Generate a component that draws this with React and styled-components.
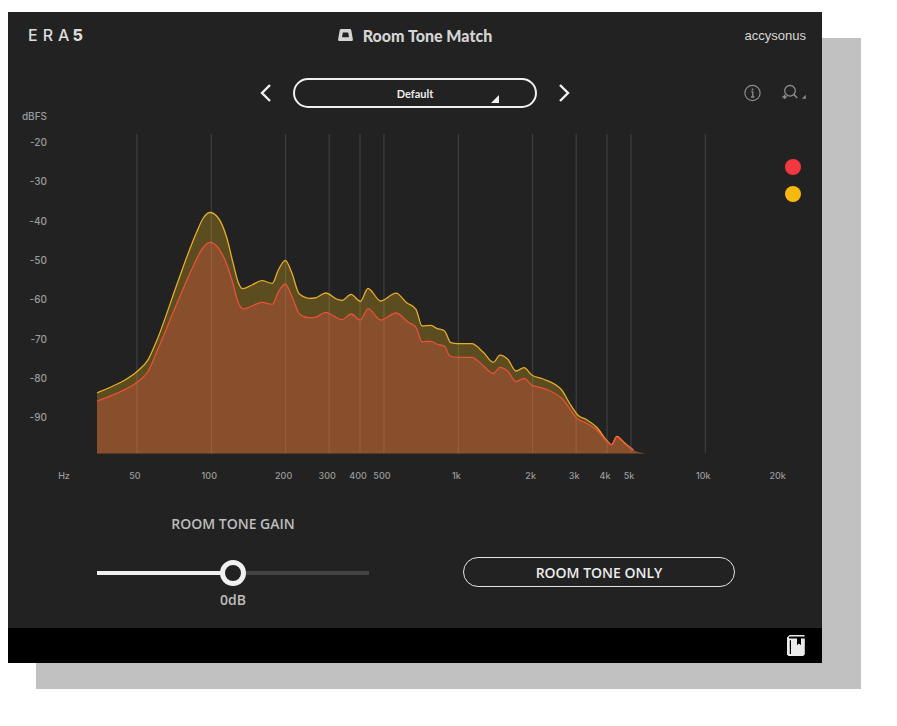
import React, { useState } from "react";
import styled, { createGlobalStyle } from "styled-components";

const yellowPoints = [
  [97, 393], [113, 386], [125, 380], [137, 371.5], [148.3, 359.3], [156.7, 340.7],
  [176.7, 285], [188.3, 253], [196.7, 232], [203.3, 218], [210, 212.5],
  [218.3, 218], [226.7, 237.5], [233.3, 264], [238.3, 282.5], [242.5, 288.7],
  [252, 285], [261.7, 280.7], [272.3, 283.3], [278.3, 270], [285.3, 260.3],
  [291.7, 272.5], [299.3, 294], [310, 298.3], [315, 298], [325.7, 293],
  [336.7, 299], [342, 300.5], [351, 294.3], [360.3, 301.3], [368, 288.5],
  [380.7, 301], [396, 293.2], [406.7, 302.7], [416, 309.3], [422, 326],
  [431, 325.3], [436.7, 328.3], [444.3, 330.7], [451, 342.7], [458, 343.7],
  [471.7, 343.7], [483.3, 352.3], [493.3, 362.3], [500, 355.2], [507.7, 359.3],
  [516, 371], [524, 367.7], [531.7, 375], [543.3, 379], [561.7, 390],
  [570, 404], [578.3, 415.5], [586.7, 419.7], [596.7, 427.3], [606.7, 440.3],
  [611.7, 444.7], [616.7, 436.3], [625, 443.3], [633.3, 450], [645, 453.5],
];

const redPoints = [
  [97, 401], [116.7, 393.3], [137, 382.3], [148.3, 371], [156.7, 352],
  [180, 296], [193.3, 266], [201.7, 249.5], [210, 242.3], [218.3, 248],
  [226.7, 264], [233.3, 285], [238.3, 302.7], [243.5, 308.8], [252, 306],
  [261.7, 302.3], [272.3, 304.3], [278.3, 292], [285.3, 284], [291.7, 296],
  [300, 314.5], [308.3, 317.7], [315, 317.4], [325.7, 312.3], [342, 319.7],
  [351, 314], [360.3, 320], [368, 308.7], [380.7, 320], [396, 313],
  [408.3, 322.3], [416, 327.3], [422, 341.7], [431, 341.3], [436.7, 344],
  [444.3, 346], [450, 356], [458, 357.3], [471.7, 357.3], [483.3, 365.7],
  [493.3, 373.5], [500, 367.3], [507.7, 371], [516, 381.5], [524, 378.3],
  [531.7, 385], [543.3, 388.3], [561.7, 398.3], [578.3, 419.5], [586.7, 423.3],
  [596.7, 430], [606.7, 441.3], [611.7, 444.9], [616.7, 437], [625, 444],
  [633.3, 450.5], [645, 453.5],
];

const frequencies = [
  [50, "50"], [100, "100"], [200, "200"], [300, "300"], [400, "400"],
  [500, "500"], [1000, "1k"], [2000, "2k"], [3000, "3k"], [4000, "4k"],
  [5000, "5k"], [10000, "10k"], [20000, "20k"],
];

const levels = [-20, -30, -40, -50, -60, -70, -80, -90];

const presets = ["Default", "Dialogue", "Interview", "Outdoor"];

const xOf = (hz) => 211.3 + 247 * Math.log10(hz / 100);
const yOf = (db) => 142 + (-20 - db) * 3.93;

// monotone cubic so the curve never overshoots its points
const curve = (pts) => {
  const n = pts.length;
  const slope = [];
  for (let i = 0; i < n - 1; i++) {
    slope.push((pts[i + 1][1] - pts[i][1]) / (pts[i + 1][0] - pts[i][0]));
  }
  const m = pts.map((p, i) => {
    if (i === 0) return slope[0];
    if (i === n - 1) return slope[n - 2];
    const a = slope[i - 1];
    const b = slope[i];
    const h0 = p[0] - pts[i - 1][0];
    const h1 = pts[i + 1][0] - p[0];
    const mid = (a * h1 + b * h0) / (h0 + h1);
    return (
      (Math.sign(a) + Math.sign(b)) *
      Math.min(Math.abs(a), Math.abs(b), Math.abs(mid) / 2)
    );
  });
  let d = `M${pts[0][0]} ${pts[0][1]}`;
  for (let i = 0; i < n - 1; i++) {
    const [x0, y0] = pts[i];
    const [x1, y1] = pts[i + 1];
    const h = (x1 - x0) / 3;
    d += `C${x0 + h} ${y0 + m[i] * h} ${x1 - h} ${y1 - m[i + 1] * h} ${x1} ${y1}`;
  }
  return d;
};

const Spectrum = ({ showRed, showYellow }) => {
  return (
    <ChartSvg viewBox="8 108 814 378" role="img" aria-label="Room tone spectrum">
      {frequencies.slice(0, -1).map(([hz]) => (
        <line key={hz} className="grid" x1={xOf(hz)} x2={xOf(hz)} y1="134" y2="453" />
      ))}
      {showYellow && (
        <>
          <path d={`${curve(yellowPoints)}L97 453.5Z`} fill="rgba(245, 190, 34, 0.28)" />
          <path d={curve(yellowPoints.slice(0, -1))} className="line" stroke="#e6ac28" />
        </>
      )}
      {showRed && (
        <>
          <path d={`${curve(redPoints)}L97 453.5Z`} fill="rgba(240, 85, 70, 0.3)" />
          <path d={curve(redPoints.slice(0, -1))} className="line" stroke="#ea4f37" />
        </>
      )}
      <text x="47" y="120" textAnchor="end">
        dBFS
      </text>
      {levels.map((db) => (
        <text key={db} x="47" y={yOf(db) + 4} textAnchor="end">
          {db}
        </text>
      ))}
      <text className="small" x="64" y="479" textAnchor="middle">
        Hz
      </text>
      {frequencies.map(([hz, label]) => (
        <text key={hz} className="small" x={xOf(hz) - 2} y="479" textAnchor="middle">
          {label}
        </text>
      ))}
    </ChartSvg>
  );
};

const App = () => {
  const [preset, setPreset] = useState(0);
  const [gain, setGain] = useState(0);
  const [roomToneOnly, setRoomToneOnly] = useState(false);
  const [showRed, setShowRed] = useState(true);
  const [showYellow, setShowYellow] = useState(true);

  const stepPreset = (step) => {
    setPreset((preset + step + presets.length) % presets.length);
  };

  return (
    <>
      <GlobalStyle />
      <Panel>
        <Header>
          <Brand>
            <span>E</span>
            <span>R</span>
            <span>
              A<b>5</b>
            </span>
          </Brand>
          <Title>
            <svg width="15" height="12" viewBox="0 0 15 12" aria-hidden="true">
              <path
                d="M3.2 0H11.8Q13 0 13.300 1.200L14.900 10.500Q15 12 13.600 12H1.400Q0 12 .1 10.500L1.700 1.200Q2 0 3.200 0ZM4.800 3.600L4 8.200H11L10.200 3.600Z"
                fill="#d4d4d4"
                fillRule="evenodd"
              />
            </svg>
            Room Tone Match
          </Title>
          <Company>accysonus</Company>
        </Header>

        <PresetBar>
          <PresetPicker>
            <IconButton aria-label="Previous preset" onClick={() => stepPreset(-1)}>
              <svg width="12" height="20" viewBox="0 0 12 20">
                <path d="M11 2L3 10L11 18" fill="none" stroke="#f0f0f0" strokeWidth="2.400" />
              </svg>
            </IconButton>
            <SelectBox>
              <select
                aria-label="Preset"
                value={preset}
                onChange={(e) => setPreset(Number(e.target.value))}
              >
                {presets.map((name, index) => (
                  <option key={name} value={index}>
                    {name}
                  </option>
                ))}
              </select>
              <svg width="8" height="8" viewBox="0 0 8 8" aria-hidden="true">
                <path d="M8 0V8H0Z" fill="#f0f0f0" />
              </svg>
            </SelectBox>
            <IconButton aria-label="Next preset" onClick={() => stepPreset(1)}>
              <svg width="12" height="20" viewBox="0 0 12 20">
                <path d="M1 2L9 10L1 18" fill="none" stroke="#f0f0f0" strokeWidth="2.400" />
              </svg>
            </IconButton>
          </PresetPicker>
          <Tools>
            <IconButton aria-label="Info">
              <svg width="18" height="18" viewBox="0 0 18 18">
                <circle cx="8.500" cy="9" r="7.600" fill="none" stroke="#8c8c8c" strokeWidth="1.200" />
                <circle cx="8.500" cy="5.400" r="1" fill="#8c8c8c" />
                <path d="M7.200 7.900H8.800V13M7 13H10.400" fill="none" stroke="#8c8c8c" strokeWidth="1.300" />
              </svg>
            </IconButton>
            <IconButton aria-label="Zoom">
              <svg width="24" height="18" viewBox="0 0 24 18">
                <circle cx="8" cy="6.800" r="5.300" fill="none" stroke="#8c8c8c" strokeWidth="1.300" />
                <path d="M11.800 10.600L15.300 14" stroke="#8c8c8c" strokeWidth="1.500" />
                <path d="M2.600 10.800V15M.5 12.900H4.700" stroke="#8c8c8c" strokeWidth="1.600" />
                <path d="M23.800 10.800V14.800H19.800Z" fill="#8c8c8c" />
              </svg>
            </IconButton>
          </Tools>
        </PresetBar>

        <ChartArea>
          <Spectrum showRed={showRed} showYellow={showYellow} />
          <Legend>
            <Dot
              $color="#f5383f"
              aria-label="Toggle red curve"
              aria-pressed={showRed}
              onClick={() => setShowRed(!showRed)}
            />
            <Dot
              $color="#f7b90f"
              aria-label="Toggle yellow curve"
              aria-pressed={showYellow}
              onClick={() => setShowYellow(!showYellow)}
            />
          </Legend>
        </ChartArea>

        <Controls>
          <Gain>
            <label htmlFor="gain">ROOM TONE GAIN</label>
            <Slider
              id="gain"
              type="range"
              min="-12"
              max="12"
              value={gain}
              style={{ "--fill": `${((gain + 12) / 24) * 100}%` }}
              onChange={(e) => setGain(Number(e.target.value))}
            />
            <output htmlFor="gain">{gain}dB</output>
          </Gain>
          <ToneButton aria-pressed={roomToneOnly} onClick={() => setRoomToneOnly(!roomToneOnly)}>
            ROOM TONE ONLY
          </ToneButton>
        </Controls>

        <Footer>
          <IconButton aria-label="Manual">
            <svg width="18" height="22" viewBox="0 0 18 22">
              <path
                d="M2.500 0H17.500V1.600H2.600C1.600 1.600 1.600 3.600 2.600 3.600H10V10L11.900 8.200L13.800 10V3.600H17.800V19.300L16.200 21H1.500L0 19.600V2.500Z"
                fill="#ececec"
              />
              <path d="M10 3H13.800V10L11.900 8.200L10 10Z" fill="#000" />
              <path d="M3.400 5.200V19" stroke="#000" strokeWidth="1.200" />
            </svg>
          </IconButton>
        </Footer>
      </Panel>
    </>
  );
};

const GlobalStyle = createGlobalStyle`
  * {
    box-sizing: border-box;
  }
  body {
    margin: 0;
    background-color: white;
    font-family: "Open Sans", "Noto Sans", sans-serif;
  }
`;

const Panel = styled.main`
  margin: 12px 75px 63px 8px;
  background-color: #222222;
  box-shadow: 39px 26px 0 #c1c1c1, 28px 26px 0 #c1c1c1;
`;

const Header = styled.header`
  display: grid;
  grid-template-columns: 1fr auto 1fr;
  align-items: center;
  height: 46px;
  padding: 0 16px;
`;

const Brand = styled.div`
  display: flex;
  gap: 5px;
  padding-left: 4px;
  font-family: Inter, sans-serif;
  font-size: 16px;
  font-weight: 500;
  color: #dcdcdc;

  b {
    margin-left: 3px;
    font-weight: 800;
  }
`;

const Title = styled.h1`
  display: flex;
  align-items: center;
  gap: 10px;
  margin: 0;
  font-family: Lato, sans-serif;
  font-size: 16px;
  font-weight: 900;
  color: #d4d4d4;
`;

const Company = styled.div`
  justify-self: end;
  font-family: "Liberation Sans", sans-serif;
  font-size: 13px;
  color: #d8d8d8;
`;

const PresetBar = styled.div`
  display: grid;
  grid-template-columns: 1fr auto 1fr;
  align-items: center;
  padding: 20px 16px 0;
`;

const PresetPicker = styled.div`
  grid-column: 2;
  display: flex;
  align-items: center;
  gap: 22px;
`;

const IconButton = styled.button`
  display: flex;
  padding: 0;
  border: none;
  background: none;
  cursor: pointer;
`;

const SelectBox = styled.div`
  position: relative;

  select {
    appearance: none;
    width: 244px;
    height: 30px;
    border: 2px solid #f0f0f0;
    border-radius: 15px;
    background-color: transparent;
    color: #ececec;
    font-family: Lato, sans-serif;
    font-size: 11px;
    font-weight: 700;
    text-align: center;
    text-align-last: center;
  }

  option {
    color: black;
  }

  svg {
    position: absolute;
    right: 38px;
    bottom: 5px;
    pointer-events: none;
  }
`;

const Tools = styled.div`
  display: flex;
  align-items: center;
  justify-self: end;
  gap: 20px;
`;

const ChartArea = styled.div`
  position: relative;
`;

const ChartSvg = styled.svg`
  display: block;
  width: 100%;
  height: auto;

  .grid {
    stroke: #444444;
  }

  .line {
    fill: none;
    stroke-width: 1.3;
  }

  text {
    font-family: Inter, sans-serif;
    font-size: 10px;
    font-weight: 500;
    fill: #9a9a9a;
  }

  .small {
    font-size: 9px;
  }
`;

const Legend = styled.div`
  position: absolute;
  top: 51px;
  right: 21px;
  display: grid;
  gap: 11px;
`;

const Dot = styled.button`
  width: 16px;
  height: 16px;
  padding: 0;
  border: none;
  border-radius: 50%;
  background-color: ${(props) => props.$color};
  cursor: pointer;
`;

const Controls = styled.div`
  display: grid;
  grid-template-columns: 1fr 1fr;
  align-items: center;
  gap: 94px;
  padding: 28px 87px 18px 89px;
`;

const Gain = styled.div`
  display: flex;
  flex-direction: column;
  align-items: center;
  font-size: 14px;
  font-weight: 600;
  line-height: 20px;
  color: #bdbdbd;
`;

const Slider = styled.input`
  appearance: none;
  width: 100%;
  height: 26px;
  margin: 26px 0 4px;
  background: none;
  cursor: pointer;

  &::-webkit-slider-runnable-track {
    height: 4px;
    background: linear-gradient(
      to right,
      #f0f0f0 var(--fill),
      #444444 var(--fill)
    );
  }

  &::-webkit-slider-thumb {
    appearance: none;
    width: 26px;
    height: 26px;
    margin-top: -11px;
    border: 5px solid #f0f0f0;
    border-radius: 50%;
    background-color: #222222;
  }
`;

const ToneButton = styled.button`
  height: 30px;
  margin-top: 20px;
  border: 1px solid #e4e4e4;
  border-radius: 15px;
  background-color: transparent;
  color: #ececec;
  font-family: inherit;
  font-size: 14px;
  font-weight: 600;
  cursor: pointer;
`;

const Footer = styled.footer`
  display: flex;
  align-items: center;
  justify-content: flex-end;
  height: 35px;
  padding: 0 17px;
  background-color: black;
`;

export default App;
